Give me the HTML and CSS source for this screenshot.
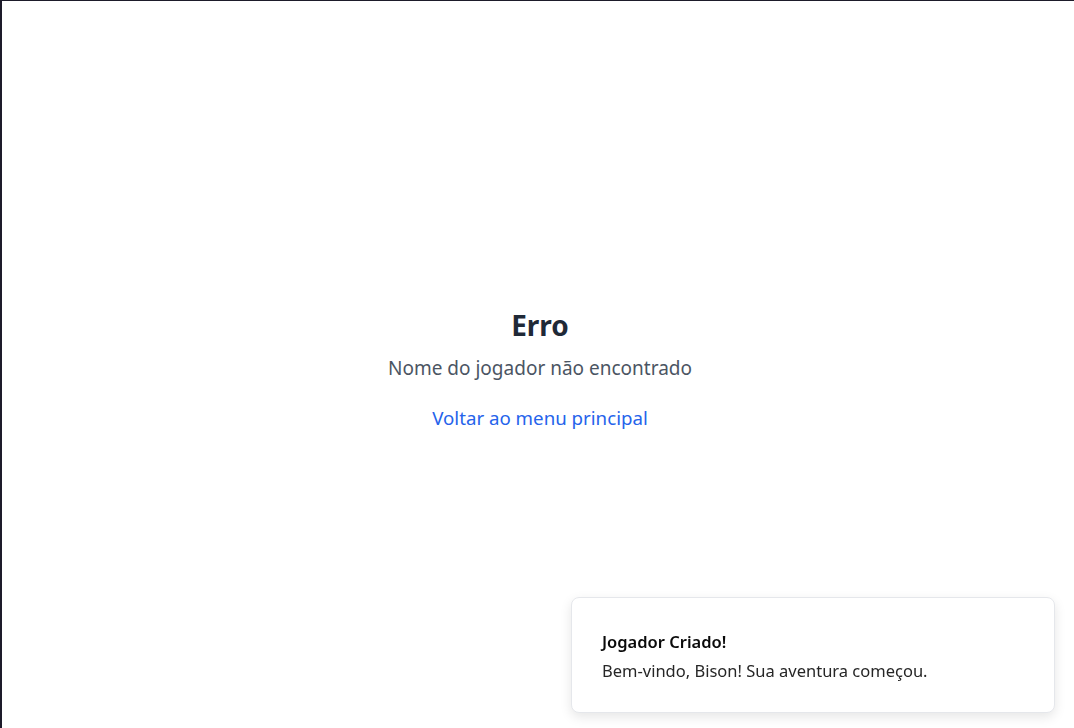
FILE: index.html
```html
<!DOCTYPE html>
<html lang="pt">
<head>
<meta charset="utf-8">
<title>Erro</title>
<link rel="stylesheet" href="styles.css">
</head>
<body>
<div class="frame">
  <main class="error">
    <h1 class="error-title">Erro</h1>
    <p class="error-text">Nome do jogador não encontrado</p>
    <a class="error-link" href="#">Voltar ao menu principal</a>
  </main>
</div>
<div class="toast">
  <div class="toast-title">Jogador Criado!</div>
  <div class="toast-body">Bem-vindo, Bison! Sua aventura começou.</div>
</div>
</body>
</html>
```
FILE: styles.css
```css
html, body {
  margin: 0;
  padding: 0;
  height: 100%;
  background: #ffffff;
  font-family: "Noto Sans", "Open Sans", sans-serif;
}
.frame {
  box-sizing: border-box;
  height: 100vh;
  border-left: 2px solid #1d1b2a;
  border-top: 1px solid #1d1b2a;
  display: flex;
  align-items: center;
  justify-content: center;
}
.error {
  display: flex;
  flex-direction: column;
  align-items: center;
  margin-left: 4px;
  margin-top: 10px;
}
.error-title {
  margin: 0;
  font-size: 28px;
  line-height: 36px;
  font-weight: 700;
  color: #1f2937;
}
.error-text {
  margin: 11px 0 0;
  font-size: 19px;
  line-height: 28px;
  color: #4b5563;
}
.error-link {
  margin-top: 22px;
  font-size: 18.7px;
  line-height: 28px;
  color: #2563eb;
  text-decoration: none;
}
.toast {
  position: fixed;
  right: 19px;
  bottom: 15px;
  width: 484px;
  height: 116px;
  box-sizing: border-box;
  padding: 30px 30px;
  border: 1px solid #e5e7eb;
  border-radius: 8px;
  background: #ffffff;
  box-shadow: 0 4px 12px rgba(0,0,0,0.1);
  display: flex;
  flex-direction: column;
  justify-content: center;
  gap: 7px;
  padding-top: 32px;
}
.toast-title {
  font-size: 16.5px;
  font-weight: 600;
  color: #0a0a0a;
  line-height: 22px;
}
.toast-body {
  font-size: 16.5px;
  color: #262626;
  line-height: 22px;
}
```
